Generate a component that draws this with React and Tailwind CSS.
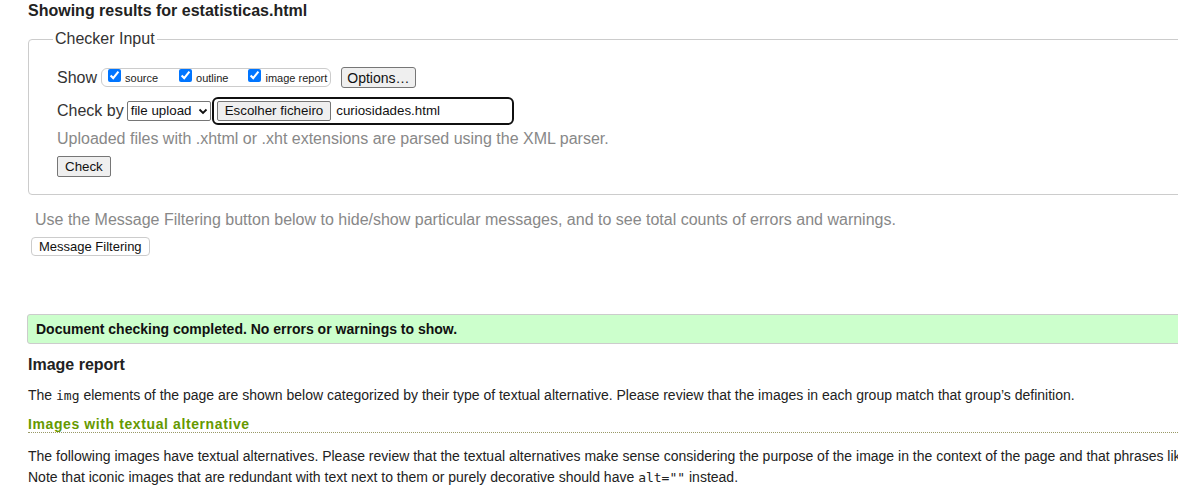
import React from "react";

function Cb({ label, className = "" }) {
  return (
    <label className={"flex items-center " + className}>
      <input type="checkbox" defaultChecked className="m-0 h-[13px] w-[13px] accent-[#0075ff] relative -top-[2px]" />
      <span className="ml-[4px] text-[11px] text-[#222] relative top-[1px]">{label}</span>
    </label>
  );
}

export default function App() {
  return (
    <div className="w-[1178px] h-[490px] overflow-hidden bg-white" style={{ fontFamily: '"Liberation Sans", Arial, sans-serif' }}>
      <div className="w-[1500px] pl-[28px] text-[#222]">
        <h2 className="m-0 pt-[1px] text-[16px] leading-[19px] font-bold text-[#222]">Showing results for estatisticas.html</h2>

        <fieldset className="mt-[10px] border border-[#ccc] rounded-[4px] pl-[28px] pb-[17px] min-w-0">
          <legend className="-ml-[4px] px-[2px] text-[16px] leading-[18px] text-[#333]">Checker Input</legend>

          <div className="mt-[18px] flex items-center h-[23px]">
            <span className="text-[16px] text-[#333]">Show</span>
            <div className="ml-[4px] flex items-center h-[19px] border border-[#ccc] rounded-[6px] pl-[6px] pr-[3px]">
              <Cb label="source" />
              <Cb label="outline" className="ml-[21px]" />
              <Cb label="image report" className="ml-[20px]" />
            </div>
            <button className="ml-[10px] h-[21px] px-[5px] text-[14px] leading-[16px] text-[#111] bg-[#efefef] border border-[#767676] rounded-[3px]">Options…</button>
          </div>

          <div className="mt-[8px] flex items-center h-[28px]">
            <span className="text-[16px] text-[#333]">Check by</span>
            <div className="ml-[3px] flex items-center justify-between w-[84px] h-[20px] border border-[#767676] rounded-[2px] pl-[3px] pr-[2px] bg-white">
              <span className="text-[13.33px] text-[#111]">file upload</span>
              <svg width="10" height="10" viewBox="0 0 10 10">
                <path d="M1.5 3.5 L5 7 L8.5 3.5" fill="none" stroke="#111" strokeWidth="1.8" />
              </svg>
            </div>
            <div className="ml-[1px] flex items-center w-[302px] h-[28px] border-2 border-[#101010] rounded-[6px] pl-[3px]">
              <span className="flex items-center h-[20px] px-[7px] text-[13.33px] text-[#111] bg-[#efefef] border border-[#767676] rounded-[2px]">Escolher ficheiro</span>
              <span className="ml-[5px] text-[13.33px] text-[#111]">curiosidades.html</span>
            </div>
          </div>

          <p className="m-0 mt-[5px] text-[16px] leading-[18px] text-[#888]">Uploaded files with .xhtml or .xht extensions are parsed using the XML parser.</p>

          <button className="mt-[8px] h-[21px] px-[7px] text-[13.33px] text-[#111] bg-[#efefef] border border-[#767676] rounded-[2px] block">Check</button>
        </fieldset>

        <p className="m-0 mt-[16px] ml-[7px] text-[16px] leading-[18px] text-[#888]">Use the Message Filtering button below to hide/show particular messages, and to see total counts of errors and warnings.</p>
        <button className="mt-[8px] ml-[3px] h-[19px] px-[7px] text-[13px] leading-[15px] text-[#111] bg-white border border-[#ccc] rounded-[4px] block">Message Filtering</button>

        <div className="mt-[58px] -ml-[1px] h-[30px] flex items-center pl-[8px] bg-[#ccffcc] border border-[#ccc] rounded-[3px]">
          <span className="text-[14px] font-bold text-[#111]">Document checking completed. No errors or warnings to show.</span>
        </div>

        <h3 className="m-0 mt-[11px] text-[16px] leading-[19px] font-bold text-[#222]">Image report</h3>
        <p className="m-0 mt-[11px] text-[14px] leading-[20px] text-[#222]">
          The <code className="text-[13px]" style={{ fontFamily: '"DejaVu Sans Mono", "Liberation Mono", monospace' }}>img</code> elements of the page are shown below categorized by their type of textual alternative. Please review that the images in each group match that group’s definition.
        </p>
        <h4 className="m-0 mt-[10px] text-[14px] leading-[16px] font-bold tracking-[0.6px] text-[#669900] border-b border-dotted border-[#999966]">Images with textual alternative</h4>
        <div className="mt-[13px] text-[14px] leading-[21px] text-[#222] whitespace-nowrap">
          <div>The following images have textual alternatives. Please review that the textual alternatives make sense considering the purpose of the image in the context of the page and that phrases like “image of” are not used.</div>
          <div>
            Note that iconic images that are redundant with text next to them or purely decorative should have{" "}
            <code className="text-[13px]" style={{ fontFamily: '"DejaVu Sans Mono", "Liberation Mono", monospace' }}>alt=""</code> instead.
          </div>
        </div>
      </div>
    </div>
  );
}
